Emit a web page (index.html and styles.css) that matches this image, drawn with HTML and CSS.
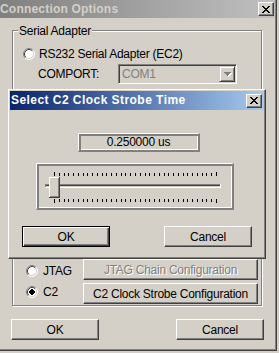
FILE: index.html
```html
<!DOCTYPE html>
<html>
<head>
<meta charset="utf-8">
<link rel="stylesheet" href="styles.css">
</head>
<body>
<div class="win">
  <div class="titlebar inactive">
    <span class="ttl">Connection Options</span>
    <span class="tbtn"><svg width="8" height="7" viewBox="0 0 8 7"><path d="M0 0h2v1H0zM6 0h2v1H6zM1 1h2v1H1zM5 1h2v1H5zM2 2h4v1H2zM3 3h2v1H3zM2 4h4v1H2zM1 5h2v1H1zM5 5h2v1H5zM0 6h2v1H0zM6 6h2v1H6z" fill="#000"/></svg></span>
  </div>

  <div class="group g1">
    <span class="legend">Serial Adapter</span>
    <div class="radio-row rs232">
      <svg class="rb" width="12" height="12" viewBox="0 0 12 12"><circle cx="6" cy="6" r="5" fill="#fff"/><path d="M2.11 9.89A5.5 5.5 0 0 1 9.89 2.11" fill="none" stroke="#808080"/><path d="M9.89 2.11A5.5 5.5 0 0 1 2.11 9.89" fill="none" stroke="#fff"/><path d="M2.82 9.18A4.5 4.5 0 0 1 9.18 2.82" fill="none" stroke="#404040"/><path d="M9.18 2.82A4.5 4.5 0 0 1 2.82 9.18" fill="none" stroke="#d4d0c8"/></svg>
      <span>RS232 Serial Adapter (EC2)</span>
    </div>
    <div class="field-row">
      <span class="flabel">COMPORT:</span>
      <div class="combo">
        <span class="ctext">COM1</span>
        <span class="cbtn"><svg width="8" height="5" viewBox="0 0 8 5"><path d="M1 1h7v1H1zM2 2h5v1H2zM3 3h3v1H3zM4 4h1v1H4z" fill="#fff"/><path d="M0 0h7v1H0zM1 1h5v1H1zM2 2h3v1H2zM3 3h1v1H3z" fill="#808080"/></svg></span>
      </div>
    </div>
  </div>

  <div class="group g2">
    <div class="g2-body">
      <div class="radios">
        <div class="radio-row">
          <svg class="rb" width="12" height="12" viewBox="0 0 12 12"><circle cx="6" cy="6" r="5" fill="#fff"/><path d="M2.11 9.89A5.5 5.5 0 0 1 9.89 2.11" fill="none" stroke="#808080"/><path d="M9.89 2.11A5.5 5.5 0 0 1 2.11 9.89" fill="none" stroke="#fff"/><path d="M2.82 9.18A4.5 4.5 0 0 1 9.18 2.82" fill="none" stroke="#404040"/><path d="M9.18 2.82A4.5 4.5 0 0 1 2.82 9.18" fill="none" stroke="#d4d0c8"/></svg>
          <span>JTAG</span>
        </div>
        <div class="radio-row">
          <svg class="rb" width="12" height="12" viewBox="0 0 12 12"><circle cx="6" cy="6" r="5" fill="#fff"/><path d="M2.11 9.89A5.5 5.5 0 0 1 9.89 2.11" fill="none" stroke="#808080"/><path d="M9.89 2.11A5.5 5.5 0 0 1 2.11 9.89" fill="none" stroke="#fff"/><path d="M2.82 9.18A4.5 4.5 0 0 1 9.18 2.82" fill="none" stroke="#404040"/><path d="M9.18 2.82A4.5 4.5 0 0 1 2.82 9.18" fill="none" stroke="#d4d0c8"/><rect x="4" y="4" width="4" height="4" fill="#000"/><rect x="5" y="3" width="2" height="6" fill="#000"/><rect x="3" y="5" width="6" height="2" fill="#000"/></svg>
          <span>C2</span>
        </div>
      </div>
      <div class="cfg-buttons">
        <div class="btn disabled">JTAG Chain Configuration</div>
        <div class="btn">C2 Clock Strobe Configuration</div>
      </div>
    </div>
  </div>

  <div class="actions">
    <div class="btn act">OK</div>
    <div class="btn act">Cancel</div>
  </div>

  <div class="dlg">
    <div class="titlebar active">
      <span class="ttl">Select C2 Clock Strobe Time</span>
      <span class="tbtn"><svg width="8" height="7" viewBox="0 0 8 7"><path d="M0 0h2v1H0zM6 0h2v1H6zM1 1h2v1H1zM5 1h2v1H5zM2 2h4v1H2zM3 3h2v1H3zM2 4h4v1H2zM1 5h2v1H1zM5 5h2v1H5zM0 6h2v1H0zM6 6h2v1H6z" fill="#000"/></svg></span>
    </div>
    <div class="valbox ridge">0.250000 us</div>
    <div class="slider ridge">
      <svg width="195" height="44" viewBox="0 0 195 44">
        <path id="ticks" fill="#000" d="M17 9h1v3h-1zM22 9h1v3h-1zM27 9h1v3h-1zM31 9h1v3h-1zM36 9h1v3h-1zM41 9h1v3h-1zM46 9h1v3h-1zM50 9h1v3h-1zM55 9h1v3h-1zM60 9h1v3h-1zM65 9h1v3h-1zM69 9h1v3h-1zM74 9h1v3h-1zM79 9h1v3h-1zM84 9h1v3h-1zM88 9h1v3h-1zM93 9h1v3h-1zM98 9h1v3h-1zM103 9h1v3h-1zM108 9h1v3h-1zM112 9h1v3h-1zM117 9h1v3h-1zM122 9h1v3h-1zM127 9h1v3h-1zM131 9h1v3h-1zM136 9h1v3h-1zM141 9h1v3h-1zM146 9h1v3h-1zM150 9h1v3h-1zM155 9h1v3h-1zM160 9h1v3h-1zM165 9h1v3h-1zM169 9h1v3h-1zM174 9h1v3h-1zM179 9h1v3h-1z"/>
        <use href="#ticks" y="26"/>
        <path fill="#000" d="M17 8h1v1h-1zM179 8h1v1h-1zM17 38h1v1h-1zM179 38h1v1h-1z"/>
        <rect x="8" y="20" width="176" height="1" fill="#808080"/>
        <rect x="8" y="20" width="1" height="3" fill="#808080"/>
        <rect x="9" y="21" width="174" height="1" fill="#404040"/>
        <rect x="8" y="23" width="176" height="1" fill="#fff"/>
        <rect x="183" y="20" width="1" height="4" fill="#fff"/>
        <rect x="12" y="13" width="11" height="21" fill="#404040"/>
        <rect x="12" y="13" width="10" height="20" fill="#fff"/>
        <rect x="13" y="14" width="9" height="19" fill="#808080"/>
        <rect x="13" y="14" width="8" height="18" fill="#d4d0c8"/>
      </svg>
    </div>
    <div class="dlg-actions">
      <div class="btn dbtn default">OK</div>
      <div class="btn dbtn cancel">Cancel</div>
    </div>
  </div>
</div>
</body>
</html>
```
FILE: styles.css
```css
* { box-sizing: border-box; }

html, body {
  margin: 0;
  padding: 0;
}

body {
  width: 279px;
  height: 353px;
  overflow: hidden;
  background: #d4d0c8;
  font-family: "Liberation Sans", Arial, sans-serif;
  font-size: 12px;
  line-height: 14px;
  letter-spacing: -0.25px;
  color: #000;
}

.win {
  position: relative;
  width: 277px;
  height: 351px;
  padding: 0 1px 1px 0;
  border-right: 1px solid #404040;
  border-bottom: 1px solid #404040;
  box-shadow: inset -1px -1px #808080;
  display: flex;
  flex-direction: column;
}

.titlebar {
  display: flex;
  align-items: center;
  flex: none;
}

.titlebar.inactive {
  height: 18px;
  padding-right: 1px;
  background: linear-gradient(to right, #808080, #c0c0c0);
}

.titlebar.active {
  height: 19px;
  padding-right: 2px;
  padding-left: 1px;
  background: linear-gradient(to right, #0a246a, #a6caf0);
}

.ttl {
  flex: 1;
  font-weight: bold;
  white-space: nowrap;
}

.inactive .ttl {
  color: #d4d0c8;
  line-height: 18px;
  letter-spacing: 0.2px;
}

.active .ttl {
  color: #fff;
  line-height: 19px;
  letter-spacing: 0.45px;
}

.tbtn {
  width: 16px;
  height: 14px;
  flex: none;
  background: #d4d0c8;
  border: 1px solid;
  border-color: #fff #404040 #404040 #fff;
  box-shadow: inset -1px -1px #808080;
  display: flex;
  align-items: center;
  justify-content: center;
}

.tbtn svg { display: block; }

.group {
  width: 250px;
  flex: none;
  border: 1px solid #808080;
  box-shadow: inset 1px 1px #fff, 1px 1px #fff;
  display: flex;
  flex-direction: column;
}

.g1 {
  margin: 12px 0 0 12px;
  height: 130px;
}

.legend {
  align-self: flex-start;
  margin: -7px 0 0 5px;
  padding: 0 1px;
  background: #d4d0c8;
  line-height: 14px;
}

.radio-row {
  display: flex;
  align-items: center;
  gap: 5px;
  height: 14px;
  white-space: nowrap;
}

.rb { display: block; flex: none; }

.rs232 {
  margin: 9px 0 0 10px;
  gap: 4px;
}

.field-row {
  display: flex;
  align-items: center;
  height: 20px;
  margin: 3px 0 0 25px;
}

.flabel {
  width: 80px;
  flex: none;
}

.combo {
  width: 119px;
  height: 20px;
  display: flex;
  padding: 1px;
  border: 1px solid;
  border-color: #808080 #fff #fff #808080;
  box-shadow: inset 1px 1px #404040, inset -1px -1px #d4d0c8;
  background: #d4d0c8;
}

.ctext {
  flex: 1;
  color: #808080;
  padding-left: 2px;
  line-height: 16px;
}

.cbtn {
  width: 16px;
  height: 16px;
  flex: none;
  border: 1px solid;
  border-color: #d4d0c8 #404040 #404040 #d4d0c8;
  box-shadow: inset 1px 1px #fff, inset -1px -1px #808080;
  display: flex;
  align-items: center;
  justify-content: center;
}

.cbtn svg { display: block; margin-left: 1px; }

.g2 {
  margin: 8px 0 0 12px;
  height: 138px;
  justify-content: flex-end;
  padding-bottom: 1px;
}

.g2-body {
  display: flex;
  align-items: flex-start;
}

.radios {
  width: 70px;
  flex: none;
  padding-left: 13px;
  margin-top: 5px;
  display: flex;
  flex-direction: column;
  gap: 7px;
}

.cfg-buttons {
  width: 175px;
  display: flex;
  flex-direction: column;
  gap: 3px;
}

.btn {
  height: 21px;
  background: #d4d0c8;
  border: 1px solid;
  border-color: #fff #404040 #404040 #fff;
  box-shadow: inset -1px -1px #808080;
  display: flex;
  align-items: center;
  justify-content: center;
  white-space: nowrap;
  flex: none;
}

.btn.disabled {
  color: #808080;
  text-shadow: 1px 1px 0 #fff;
}

.actions {
  margin-top: 13px;
  padding: 0 11px;
  display: flex;
  justify-content: space-between;
}

.act { width: 88px; }

.dlg {
  position: absolute;
  left: 8px;
  top: 89px;
  width: 258px;
  height: 170px;
  padding: 1px;
  background: #d4d0c8;
  border: 1px solid;
  border-color: #fff #404040 #404040 #fff;
  box-shadow: inset -1px -1px #808080;
  display: flex;
  flex-direction: column;
}

.ridge {
  border-style: solid;
  border-width: 1px 2px 2px 1px;
  border-color: #fff #808080 #808080 #fff;
  box-shadow: inset 2px 2px #808080, inset -1px -1px #fff;
  flex: none;
}

.valbox {
  width: 122px;
  height: 19px;
  margin: 23px 0 0 68px;
  text-align: center;
  line-height: 16px;
}

.slider {
  width: 198px;
  height: 47px;
  margin: 11px 0 0 26px;
}

.slider svg { display: block; }

.dlg-actions {
  display: flex;
  margin-top: 16px;
}

.dbtn { width: 88px; }

.dbtn.default {
  margin-left: 12px;
  border-color: #000;
  box-shadow: inset 1px 1px #fff, inset -1px -1px #404040, inset -2px -2px #808080;
}

.dbtn.cancel { margin-left: 54px; }
```
